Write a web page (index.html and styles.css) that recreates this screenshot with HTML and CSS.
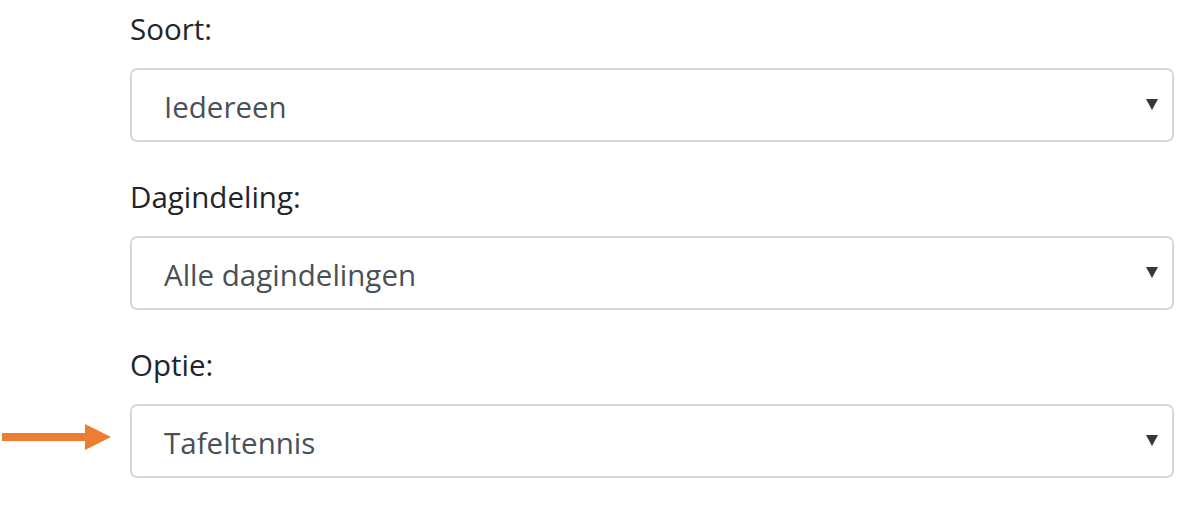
FILE: index.html
```html
<!DOCTYPE html>
<html lang="nl">
<head>
<meta charset="utf-8">
<title>Filters</title>
<link rel="stylesheet" href="styles.css">
</head>
<body>
<form class="filters">
  <div class="group">
    <label class="label">Soort:</label>
    <div class="select">
      <span class="value">Iedereen</span>
      <svg class="caret" width="12" height="11" viewBox="0 0 12 11"><path d="M0 0H12L6 11Z"/></svg>
    </div>
  </div>
  <div class="group">
    <label class="label">Dagindeling:</label>
    <div class="select">
      <span class="value">Alle dagindelingen</span>
      <svg class="caret" width="12" height="11" viewBox="0 0 12 11"><path d="M0 0H12L6 11Z"/></svg>
    </div>
  </div>
  <div class="group">
    <label class="label">Optie:</label>
    <div class="select">
      <svg class="pointer" width="109" height="26" viewBox="0 0 109 26"><path d="M0 9H83V0L109 13L83 26V17H0Z"/></svg>
      <span class="value">Tafeltennis</span>
      <svg class="caret" width="12" height="11" viewBox="0 0 12 11"><path d="M0 0H12L6 11Z"/></svg>
    </div>
  </div>
</form>
</body>
</html>
```
FILE: styles.css
```css
html, body {
  margin: 0;
  padding: 0;
  background: #ffffff;
}
body {
  font-family: "Open Sans", "Noto Sans", "Liberation Sans", sans-serif;
}
.filters {
  display: flex;
  flex-direction: column;
  padding: 5px 23px 0 130px;
}
.group {
  display: flex;
  flex-direction: column;
  margin-bottom: 31px;
}
.label {
  font-size: 29.5px;
  line-height: 47px;
  height: 47px;
  color: #212529;
  margin-bottom: 16px;
}
.select {
  position: relative;
  box-sizing: border-box;
  height: 74px;
  border: 2px solid #d5d9de;
  border-radius: 7px;
  display: flex;
  align-items: center;
  justify-content: space-between;
  padding: 2px 14px 0 32px;
  color: #495057;
  font-size: 29.5px;
}
.caret {
  fill: #343a40;
  margin-top: -4px;
}
.pointer {
  position: absolute;
  left: -130px;
  top: 18px;
  fill: #ed7d31;
}
```
